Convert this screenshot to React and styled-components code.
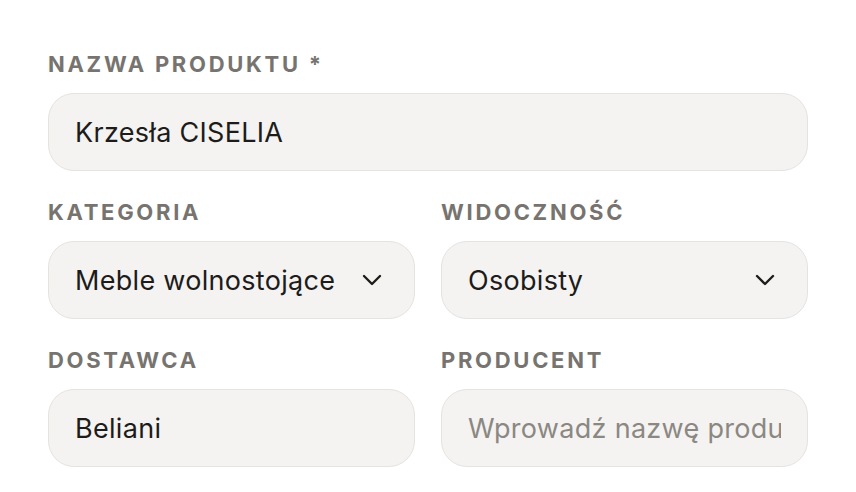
import React from "react";
import styled, { createGlobalStyle } from "styled-components";

const Global = createGlobalStyle`
  html, body {
    margin: 0;
    padding: 0;
    background: #ffffff;
  }
  * { box-sizing: border-box; }
`;

const S = {};

S.Form = styled.div`
  display: flex;
  flex-direction: column;
  gap: 27px;
  padding: 50px 48px 0 48px;
  font-family: Inter, "Noto Sans", sans-serif;
`;

S.Row = styled.div`
  display: grid;
  grid-template-columns: 1fr 1fr;
  column-gap: 26px;
`;

S.Field = styled.div`
  display: flex;
  flex-direction: column;
  min-width: 0;
`;

S.Label = styled.label`
  font-size: 22px;
  line-height: 28px;
  font-weight: 700;
  letter-spacing: 2.7px;
  text-transform: uppercase;
  color: #77746f;
  margin-bottom: 15px;
`;

S.Box = styled.div`
  display: flex;
  align-items: center;
  height: 78px;
  padding: 0 26px;
  background: #f4f3f1;
  border: 1.5px solid #e5e3df;
  border-radius: 26px;
  overflow: hidden;
`;

S.Value = styled.span`
  flex: 1;
  font-size: 27px;
  letter-spacing: 0.3px;
  color: ${(p) => (p.$placeholder ? "#8b8883" : "#1d1c1a")};
  white-space: nowrap;
  overflow: hidden;
`;

S.Chevron = styled.svg`
  flex: none;
  width: 20px;
  height: 12px;
  margin-left: 12px;
  margin-right: 6px;
`;

const Chevron = () => (
  <S.Chevron viewBox="0 0 20 12" fill="none">
    <polyline
      points="2,2 10,10 18,2"
      stroke="#1d1c1a"
      strokeWidth="2.4"
      strokeLinecap="round"
      strokeLinejoin="round"
    />
  </S.Chevron>
);

const Field = ({ label, value, placeholder, select }) => (
  <S.Field>
    <S.Label>{label}</S.Label>
    <S.Box>
      <S.Value $placeholder={!value}>{value || placeholder}</S.Value>
      {select && <Chevron />}
    </S.Box>
  </S.Field>
);

const App = () => (
  <>
    <Global />
    <S.Form>
      <Field label="Nazwa produktu *" value="Krzesła CISELIA" />
      <S.Row>
        <Field label="Kategoria" value="Meble wolnostojące" select />
        <Field label="Widoczność" value="Osobisty" select />
      </S.Row>
      <S.Row>
        <Field label="Dostawca" value="Beliani" />
        <Field label="Producent" placeholder="Wprowadź nazwę producenta" />
      </S.Row>
    </S.Form>
  </>
);

export default App;
